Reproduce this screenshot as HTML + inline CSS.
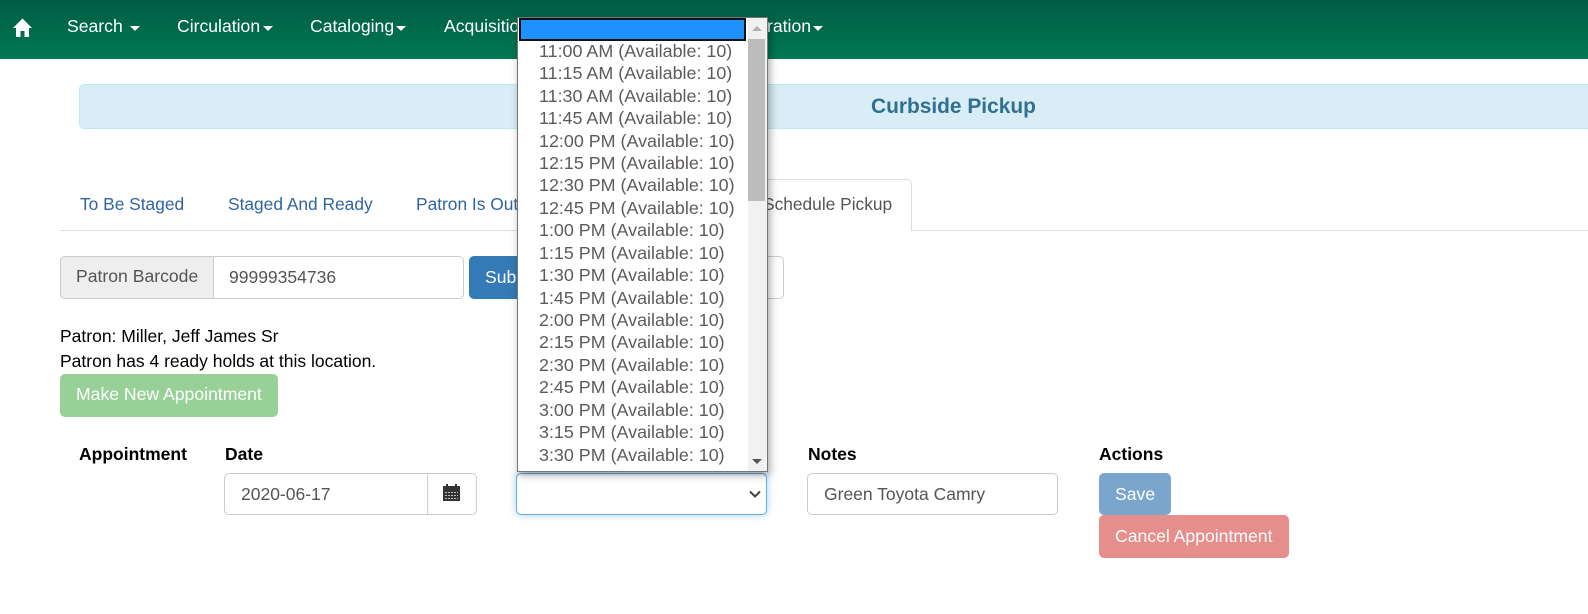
<!DOCTYPE html>
<html><head><meta charset="utf-8">
<style>
html,body{margin:0;padding:0;width:1588px;height:614px;overflow:hidden;background:#fff;}
body{font-family:"Liberation Sans",sans-serif;font-size:17.5px;color:#000;position:relative;}
.a{position:absolute;white-space:nowrap;box-sizing:border-box;}
.nav{left:0;top:0;width:1588px;height:59px;background:linear-gradient(#005c43,#007853);}
.n{color:#fff;font-size:17.6px;top:16px;line-height:20px;}
.c{width:0;height:0;border-left:5px solid transparent;border-right:5px solid transparent;border-top:5px solid #fff;top:26px;}
.tab{color:#30659f;top:194px;line-height:20px;font-size:17.35px;}
.box{border:1px solid #ccc;border-radius:5px;background:#fff;}
.btn{color:#fff;border-radius:5px;font-size:17.6px;line-height:20px;}
.b{font-weight:bold;font-size:17.5px;top:444px;line-height:20px;}
.txt{color:#555;font-size:17.5px;}
#dd{left:517px;top:17px;width:251px;height:455px;background:#fff;border:1px solid #767676;box-shadow:2px 3px 8px rgba(0,0,0,.35);overflow:hidden;}
.o{position:absolute;left:21px;color:#5f5a5c;font-size:17.9px;line-height:22px;white-space:nowrap;}
</style></head><body>
<div class="a nav"></div>
<svg class="a" style="left:12px;top:18px" width="21" height="20" viewBox="0 0 21 20"><path d="M10.5 0.5L20 10H17V19H12.5V13H8.5V19H4V10H1Z" fill="#fff"/></svg>
<div class="a n" style="left:67px">Search</div><div class="a c" style="left:130px"></div>
<div class="a n" style="left:177px">Circulation</div><div class="a c" style="left:263px"></div>
<div class="a n" style="left:310px">Cataloging</div><div class="a c" style="left:396px"></div>
<div class="a n" style="left:444px">Acquisitions</div>
<div class="a n" style="left:767px">ration</div><div class="a c" style="left:813px"></div>

<div class="a" style="left:79px;top:84px;width:1540px;height:45px;background:#d9edf7;border:1px solid #bce8f1;border-radius:5px"></div>
<div class="a" style="left:871px;top:95px;font-weight:bold;font-size:20.9px;line-height:24px;color:#31708f">Curbside Pickup</div>

<div class="a" style="left:60px;top:230px;width:1528px;height:1px;background:#ddd"></div>
<div class="a" style="left:740px;top:179px;width:172px;height:52px;background:#fff;border:1px solid #ddd;border-bottom:0;border-radius:5px 5px 0 0"></div>
<div class="a tab" style="left:80px">To Be Staged</div>
<div class="a tab" style="left:228px">Staged And Ready</div>
<div class="a tab" style="left:416px">Patron Is Outside</div>
<div class="a tab" style="left:763px;color:#555">Schedule Pickup</div>

<div class="a box" style="left:60px;top:256px;width:404px;height:43px"></div>
<div class="a" style="left:60px;top:256px;width:154px;height:43px;background:#eee;border:1px solid #ccc;border-radius:5px 0 0 5px"></div>
<div class="a txt" style="left:76px;top:266px;line-height:20px;font-size:17.6px">Patron Barcode</div>
<div class="a txt" style="left:229px;top:267px;line-height:20px">99999354736</div>
<div class="a btn" style="left:469px;top:256px;width:100px;height:43px;background:#337ab7;padding:11px 16px">Submit</div>
<div class="a box" style="left:660px;top:256px;width:124px;height:43px"></div>

<div class="a" style="left:60px;top:326px;line-height:20px">Patron: Miller, Jeff James Sr</div>
<div class="a" style="left:60px;top:351px;line-height:20px">Patron has 4 ready holds at this location.</div>
<div class="a btn" style="left:60px;top:374px;width:218px;height:43px;background:#97d197;padding:10px 16px">Make New Appointment</div>

<div class="a b" style="left:79px">Appointment</div>
<div class="a b" style="left:225px">Date</div>
<div class="a b" style="left:808px">Notes</div>
<div class="a b" style="left:1099px">Actions</div>

<div class="a box" style="left:224px;top:473px;width:253px;height:42px"></div>
<div class="a" style="left:427px;top:473px;width:1px;height:42px;background:#ccc"></div>
<div class="a txt" style="left:241px;top:484px;line-height:20px">2020-06-17</div>
<svg class="a" style="left:443px;top:483px" width="17" height="19" viewBox="0 0 17 19"><path d="M0 3H3V1H5V3H12V1H14V3H17V7H0Z" fill="#333"/><rect x="0" y="7" width="17" height="11" fill="#333"/><g fill="#bbb"><path d="M2 9h2v1H2zM5 9h2v1H5zM8 9h2v1H8zM11 9h2v1h-2zM14 9h1v1h-1zM2 12h2v1H2zM5 12h2v1H5zM8 12h2v1H8zM11 12h2v1h-2zM14 12h1v1h-1zM2 15h2v1H2zM5 15h2v1H5zM8 15h2v1H8zM11 15h2v1h-2zM14 15h1v1h-1z"/></g></svg>

<div class="a" style="left:516px;top:473px;width:251px;height:42px;background:#fff;border:1px solid #66afe9;border-radius:5px;box-shadow:inset 0 1px 1px rgba(0,0,0,.075),0 0 8px rgba(102,175,233,.6)"></div>
<svg class="a" style="left:749px;top:490px" width="12" height="9" viewBox="0 0 12 9"><path d="M1 1.5L6 6.5L11 1.5" fill="none" stroke="#444" stroke-width="2"/></svg>

<div class="a box" style="left:807px;top:473px;width:251px;height:42px"></div>
<div class="a txt" style="left:824px;top:484px;line-height:20px">Green Toyota Camry</div>

<div class="a btn" style="left:1099px;top:473px;width:72px;height:42px;background:#7aa6cd;padding:11px 16px">Save</div>
<div class="a btn" style="left:1099px;top:515px;width:190px;height:43px;background:#e58e8b;padding:11px 16px">Cancel Appointment</div>

<div class="a" id="dd">
<div style="position:absolute;left:1px;top:0;width:227px;height:23px;background:#1e90ff;border:2px solid #111;box-sizing:border-box"></div>
<div style="position:absolute;right:0;top:0;width:19px;height:453px;background:#f1f1f1"></div>
<div style="position:absolute;right:2px;top:21px;width:17px;height:162px;background:#bcbcbc"></div>
<div style="position:absolute;left:234px;top:8px;width:0;height:0;border-left:5px solid transparent;border-right:5px solid transparent;border-bottom:5px solid #b0b0b0"></div>
<div style="position:absolute;left:234px;top:441px;width:0;height:0;border-left:5px solid transparent;border-right:5px solid transparent;border-top:5px solid #555"></div>
<div class="o" style="top:22px">11:00 AM (Available: 10)</div>
<div class="o" style="top:44px">11:15 AM (Available: 10)</div>
<div class="o" style="top:67px">11:30 AM (Available: 10)</div>
<div class="o" style="top:89px">11:45 AM (Available: 10)</div>
<div class="o" style="top:112px">12:00 PM (Available: 10)</div>
<div class="o" style="top:134px">12:15 PM (Available: 10)</div>
<div class="o" style="top:156px">12:30 PM (Available: 10)</div>
<div class="o" style="top:179px">12:45 PM (Available: 10)</div>
<div class="o" style="top:201px">1:00 PM (Available: 10)</div>
<div class="o" style="top:224px">1:15 PM (Available: 10)</div>
<div class="o" style="top:246px">1:30 PM (Available: 10)</div>
<div class="o" style="top:269px">1:45 PM (Available: 10)</div>
<div class="o" style="top:291px">2:00 PM (Available: 10)</div>
<div class="o" style="top:313px">2:15 PM (Available: 10)</div>
<div class="o" style="top:336px">2:30 PM (Available: 10)</div>
<div class="o" style="top:358px">2:45 PM (Available: 10)</div>
<div class="o" style="top:381px">3:00 PM (Available: 10)</div>
<div class="o" style="top:403px">3:15 PM (Available: 10)</div>
<div class="o" style="top:426px">3:30 PM (Available: 10)</div>
</div>
</body></html>
